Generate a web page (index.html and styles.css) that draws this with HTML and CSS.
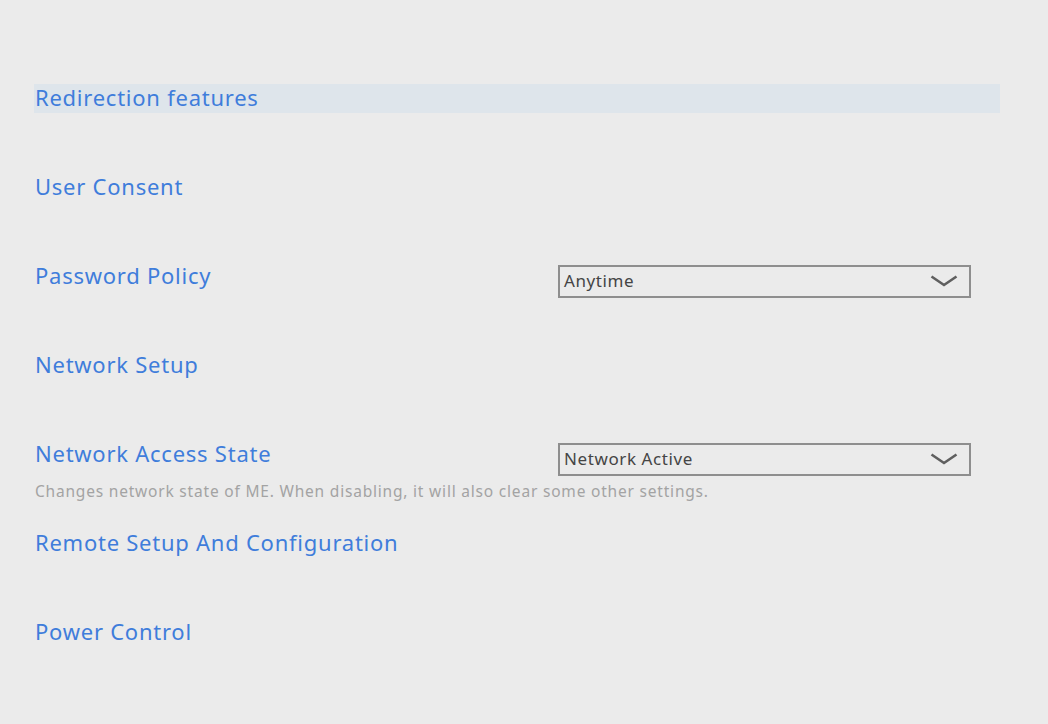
FILE: index.html
```html
<!DOCTYPE html>
<html>
<head>
<meta charset="utf-8">
<link rel="stylesheet" href="styles.css">
</head>
<body>
<div class="page">
  <div class="row">
    <div class="main highlight"><div class="label">Redirection features</div></div>
  </div>
  <div class="row">
    <div class="main"><div class="label">User Consent</div></div>
  </div>
  <div class="row">
    <div class="main">
      <div class="label">Password Policy</div>
      <div class="select"><span>Anytime</span>
        <svg class="chev" width="28" height="12" viewBox="0 0 28 12"><path d="M1.5 1.5 L14 10 L26.5 1.5" fill="none" stroke="#5f5f5f" stroke-width="2.6"/></svg>
      </div>
    </div>
  </div>
  <div class="row">
    <div class="main"><div class="label">Network Setup</div></div>
  </div>
  <div class="row">
    <div class="main">
      <div class="label">Network Access State</div>
      <div class="select"><span>Network Active</span>
        <svg class="chev" width="28" height="12" viewBox="0 0 28 12"><path d="M1.5 1.5 L14 10 L26.5 1.5" fill="none" stroke="#5f5f5f" stroke-width="2.6"/></svg>
      </div>
    </div>
    <div class="desc">Changes network state of ME. When disabling, it will also clear some other settings.</div>
  </div>
  <div class="row">
    <div class="main"><div class="label">Remote Setup And Configuration</div></div>
  </div>
  <div class="row">
    <div class="main"><div class="label">Power Control</div></div>
  </div>
</div>
</body>
</html>
```
FILE: styles.css
```css
html, body {
  margin: 0;
  padding: 0;
  background: #ebebeb;
  width: 1048px;
  height: 724px;
  overflow: hidden;
}
body {
  font-family: "Noto Sans", "Open Sans", sans-serif;
}
.page {
  padding: 84px 0 0 34px;
  width: 966px;
}
.row {
  height: 89px;
  display: flex;
  flex-direction: column;
}
.main {
  height: 29px;
  display: grid;
  grid-template-columns: 524px 413px;
  align-items: start;
}
.highlight {
  background: #dee5eb;
}
.label {
  color: #3f7ddb;
  font-size: 22px;
  line-height: 27px;
  letter-spacing: 0.75px;
  padding-left: 1px;
  white-space: nowrap;
}
.select {
  margin-top: 3px;
  height: 33px;
  box-sizing: border-box;
  border: 2px solid #8e8e8e;
  display: flex;
  align-items: center;
  justify-content: space-between;
  padding: 0 11px 0 4px;
  color: #454545;
  font-size: 17px;
  letter-spacing: 0.6px;
}
.select span {
  margin-top: -3px;
}
.chev {
  display: block;
  margin-top: -2px;
}
.desc {
  margin-top: 12px;
  color: #a3a3a3;
  font-size: 15.5px;
  line-height: 20px;
  letter-spacing: 0.8px;
  padding-left: 1px;
  white-space: nowrap;
}
```
